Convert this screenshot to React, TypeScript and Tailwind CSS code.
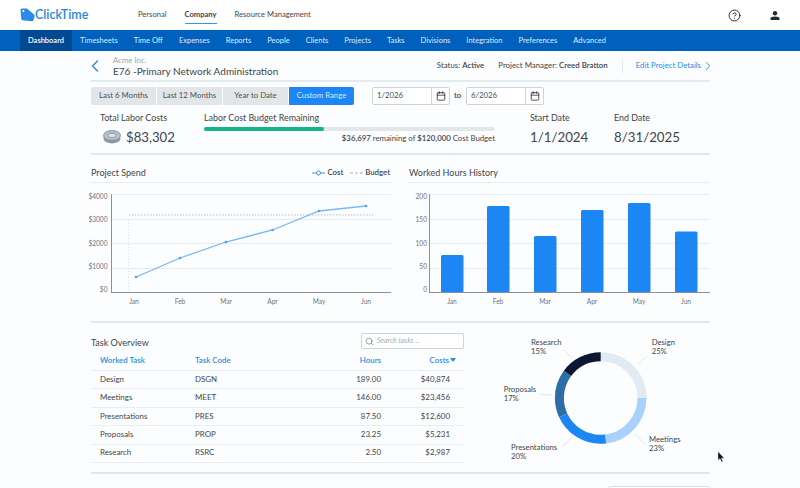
import React from "react";
import { ChevronLeft, ChevronRight, Calendar, Search, CircleHelp } from "lucide-react";

const nav = ["Dashboard","Timesheets","Time Off","Expenses","Reports","People","Clients","Projects","Tasks","Divisions","Integration","Preferences","Advanced"];
const rows = [
  ["Design","DSGN","189.00","$40,874"],
  ["Meetings","MEET","146.00","$23,456"],
  ["Presentations","PRES","87.50","$12,600"],
  ["Proposals","PROP","23.25","$5,231"],
  ["Research","RSRC","2.50","$2,987"],
];
const months = ["Jan","Feb","Mar","Apr","May","Jun"];

function Logo() {
  return (
    <div className="flex items-center">
      <svg width="15" height="14" viewBox="0 0 15 14">
        <path d="M0.5 2 Q0.5 0.5 2 0.5 L7 0.5 L14 6.5 Q15 7.5 14.5 9 L13.5 12 Q13 13.5 11.5 13.2 L2.5 12.3 Q1.5 12 1.3 11 Z" fill="#2b8be8" />
        <circle cx="3.4" cy="3" r="1" fill="#fff" />
      </svg>
      <span className="text-[12.5px] font-semibold text-[#2a86dc] leading-none">ClickTime</span>
    </div>
  );
}

function LineChart() {
  const pts = [[136,277],[180,258],[226,242],[272.5,230],[319,211],[366,206]];
  return (
    <svg width="312" height="118" viewBox="88 190 312 118" className="block">
      {[194.5,219.5,243.5,268.5].map(y => <line key={y} x1="112" x2="391" y1={y} y2={y} stroke="#e6ebf0" />)}
      {[["$4000",199],["$3000",221.5],["$2000",245.5],["$1000",268.5],["$0",291.5]].map(([t,y]) => (
        <text key={t as string} x="107.5" y={y as number} textAnchor="end" fontSize="6.6" fill="#707478">{t}</text>
      ))}
      <line x1="128.5" x2="128.5" y1="220" y2="290" stroke="#d5dbe1" strokeDasharray="1 2" />
      <line x1="129" x2="374" y1="215" y2="215" stroke="#b9bec3" strokeDasharray="1.5 1.5" />
      <line x1="111.5" x2="111.5" y1="194" y2="293" stroke="#8a929a" />
      <line x1="111" x2="391" y1="292.5" y2="292.5" stroke="#8a929a" />
      <polyline points={pts.map(p => p.join(",")).join(" ")} fill="none" stroke="#7ab8f5" strokeWidth="1.3" />
      {pts.map(p => <circle key={p[0]} cx={p[0]} cy={p[1]} r="1.3" fill="#4ea1f0" />)}
      {months.map((m,i) => <text key={m} x={[134,180,226,272.5,319,366][i]} y="303.5" textAnchor="middle" fontSize="6.6" fill="#707478">{m}</text>)}
    </svg>
  );
}

function BarChart() {
  const vals = [[441,255],[487,206],[534,236],[581,210],[628,203],[675,231.5]];
  return (
    <svg width="312" height="118" viewBox="409 190 312 118" className="block">
      {[194.5,219.5,243.5,268.5].map(y => <line key={y} x1="430" x2="710" y1={y} y2={y} stroke="#e6ebf0" />)}
      {[["200",199],["150",221.5],["100",245.5],["50",268.5],["0",291.5]].map(([t,y]) => (
        <text key={t as string} x="427" y={y as number} textAnchor="end" fontSize="6.6" fill="#707478">{t}</text>
      ))}
      {vals.map(([x,y]) => <rect key={x} x={x} y={y} width="22.5" height={292.5-y} rx="1.5" fill="#1c87f4" />)}
      <line x1="429.5" x2="429.5" y1="194" y2="293" stroke="#8a929a" />
      <line x1="429" x2="710" y1="292.5" y2="292.5" stroke="#8a929a" />
      {months.map((m,i) => <text key={m} x={[452,498,545,592,639,686][i]} y="303.5" textAnchor="middle" fontSize="6.6" fill="#707478">{m}</text>)}
    </svg>
  );
}

function Donut() {
  const cx = 130.7, cy = 75, r = 41.3;
  const segs = [[0,25,"#e2eaf3"],[25,23,"#a8d1fb"],[48,20,"#1c87f4"],[68,17,"#2f6da6"],[85,15,"#0b1733"]] as const;
  const c = 2*Math.PI*r;
  return (
    <svg width="240" height="149" viewBox="0 0 240 149" className="block">
      <g transform={`rotate(-90 ${cx} ${cy})`}>
        {segs.map(([s,l,col]) => (
          <circle key={s} cx={cx} cy={cy} r={r} fill="none" stroke={col} strokeWidth="9"
            strokeDasharray={`${c*l/100} ${c}`} strokeDashoffset={-c*s/100} />
        ))}
      </g>
      <g stroke="#e3e7eb" fill="none">
        <path d="M176.7 33 L168.3 41.3" /><path d="M165 111 L175 121" /><path d="M100.7 115 L92.7 124" /><path d="M70 71.5 L82.7 72" /><path d="M93.3 26.3 L101.7 34.7" />
      </g>
    </svg>
  );
}

function Label({ a, b, cls }: { a: string; b: string; cls: string }) {
  return (
    <div className={`absolute text-[7.7px] leading-[9.4px] text-[#3f454b] ${cls}`}>
      <div>{a}</div><div>{b}</div>
    </div>
  );
}

function DateBox({ v }: { v: string }) {
  return (
    <div className="flex h-[18px] w-[78px] items-center rounded-[2px] border border-[#cfd3d7] bg-white text-[7.8px] text-[#4b5158]">
      <span className="flex-1 pl-1">{v}</span>
      <span className="flex h-full w-[18px] items-center justify-center border-l border-[#cfd3d7]">
        <Calendar size={10} strokeWidth={2} className="text-[#2f3337]" />
      </span>
    </div>
  );
}

export default function App() {
  return (
    <div className="relative h-[488px] w-[800px] overflow-hidden bg-[#fcfdfe] text-[#3f454b] [font-family:Lato,'Open_Sans',sans-serif]">
      <header className="flex h-[30px] items-center bg-white pl-5 pr-[20px]">
        <div className="w-[118px]"><Logo /></div>
        <nav className="flex gap-[18px] text-[7.6px] text-[#3f454b]">
          <span className="border-b border-transparent py-[3px]">Personal</span>
          <span className="border-b border-[#3b93e4] py-[3px] font-bold">Company</span>
          <span className="border-b border-transparent py-[3px]">Resource Management</span>
        </nav>
        <div className="ml-auto flex items-center gap-[29px]">
          <CircleHelp size={13} strokeWidth={1.8} className="text-[#26292c]" />
          <svg width="10" height="9" viewBox="0 0 10 9">
            <circle cx="5" cy="2.3" r="2.2" fill="#26292c" />
            <path d="M0.5 9 V7.6 Q0.5 5.6 5 5.6 Q9.5 5.6 9.5 7.6 V9 Z" fill="#26292c" />
          </svg>
        </div>
      </header>
      <div className="flex h-[21px] items-stretch bg-[#0060be] pl-5 text-[7.5px] text-[#dfecf9]">
        {nav.map((n,i) => (
          <span key={n} className={`flex items-center px-2 ${i===0 ? "bg-[#004a94] text-white font-semibold" : ""}`}>{n}</span>
        ))}
      </div>
      <main className="ml-[91px] w-[619px]">
        <div className="flex h-[31px] items-center border-b-2 border-[#e2ebf0]">
          <ChevronLeft size={20} strokeWidth={1.6} className="-ml-[6px] text-[#2b86e0]" />
          <div className="ml-[8px] mt-[2px] leading-none">
            <div className="text-[7.8px] text-[#a0a5aa]">Acme Inc.</div>
            <div className="mt-[2px] text-[10px] text-[#3f454b]">E76 -Primary Network Administration</div>
          </div>
          <div className="ml-auto flex items-center text-[7.85px]">
            <span>Status: <b className="font-semibold">Active</b></span>
            <span className="ml-[14px]">Project Manager: <b className="font-semibold">Creed Bratton</b></span>
            <span className="ml-[14px] flex h-[14px] items-center border-l border-[#e5e8ea] pl-[13px] text-[7.8px] text-[#2b8be8]">Edit Project Details<ChevronRight size={14} strokeWidth={1.6} className="-mr-[5px]" /></span>
          </div>
        </div>
        <div className="mt-[5px] flex items-center">
          <div className="flex h-[18px] gap-px text-[7.8px] text-[#4b5158]">
            <span className="flex w-[65px] items-center justify-center rounded-l-[2px] bg-[#e3e6e8]">Last 6 Months</span>
            <span className="flex w-[65px] items-center justify-center bg-[#e3e6e8]">Last 12 Months</span>
            <span className="flex w-[65px] items-center justify-center bg-[#e3e6e8]">Year to Date</span>
            <span className="flex w-[65px] items-center justify-center rounded-r-[2px] bg-[#1c87f4] text-[#d5e8fd]">Custom Range</span>
          </div>
          <div className="ml-[18px]"><DateBox v="1/2026" /></div>
          <span className="mx-[4px] w-[8px] text-[7.8px] font-semibold">to</span>
          <DateBox v="6/2026" />
        </div>
        <div className="mt-[7px] flex h-[43px] border-b-2 border-[#e0e8ee]">
          <div className="ml-[9px] w-[104px]">
            <div className="text-[8.9px] leading-[12px]">Total Labor Costs</div>
            <div className="mt-[4px] flex items-center gap-[5px] pl-[3px]">
              <svg width="18" height="14" viewBox="0 0 18 14">
                <ellipse cx="9" cy="8.5" rx="8.5" ry="5" fill="#8c99a8" />
                <ellipse cx="9" cy="5.5" rx="8.5" ry="5" fill="#b5bfca" stroke="#7f8c9b" strokeWidth="0.8" />
                <ellipse cx="9" cy="5.5" rx="4" ry="2.2" fill="#dfe4ea" stroke="#7f8c9b" strokeWidth="0.8" />
              </svg>
              <span className="text-[13.2px] leading-[18px]">$83,302</span>
            </div>
          </div>
          <div className="w-[291px]">
            <div className="text-[8.9px] leading-[12px]">Labor Cost Budget Remaining</div>
            <div className="mt-[3px] h-1 rounded-full bg-[#e4e7ea]">
              <div className="h-1 w-[120px] rounded-full bg-[#12b48c]" />
            </div>
            <div className="mt-px text-right text-[7.8px] leading-[12px]"><b className="font-semibold">$36,697</b> remaining of <b className="font-semibold">$120,000</b> Cost Budget</div>
          </div>
          <div className="ml-[35px] w-[84px]">
            <div className="text-[8.9px] leading-[12px]">Start Date</div>
            <div className="mt-[4px] text-[13.3px] leading-[18px]">1/1/2024</div>
          </div>
          <div>
            <div className="text-[8.9px] leading-[12px]">End Date</div>
            <div className="mt-[4px] text-[13.3px] leading-[18px]">8/31/2025</div>
          </div>
        </div>
        <div className="flex gap-[18px]">
          <section className="w-[300px]">
            <div className="flex h-[28px] items-center justify-between border-b border-[#e6edf1] pt-[8px] text-[9px]">
              <span>Project Spend</span>
              <span className="flex items-center gap-[7px] pr-[1px] text-[7.8px]">
                <span className="flex items-center gap-[2px]">
                  <svg width="13" height="6" viewBox="0 0 13 6"><line x1="0" x2="13" y1="3" y2="3" stroke="#3b93e4" /><circle cx="6.5" cy="3" r="2" fill="#fff" stroke="#3b93e4" /></svg>
                  <b className="font-semibold">Cost</b>
                </span>
                <span className="flex items-center gap-[2px]">
                  <svg width="13" height="6" viewBox="0 0 13 6"><line x1="0" x2="13" y1="3" y2="3" stroke="#aab0b6" strokeDasharray="3 2" /></svg>
                  <b className="font-semibold">Budget</b>
                </span>
              </span>
            </div>
            <div className="mt-[7px] -ml-[3px]"><LineChart /></div>
          </section>
          <section className="w-[301px]">
            <div className="flex h-[28px] items-center border-b border-[#e6edf1] pt-[8px] text-[9px]">Worked Hours History</div>
            <div className="mt-[7px]"><BarChart /></div>
          </section>
        </div>
        <div className="mt-[13px] flex h-[153px] border-y-2 border-[#e0e8ee]">
          <section className="w-[373px]">
            <div className="flex h-[28px] items-start justify-between">
              <span className="mt-[14px] text-[9px] leading-[12px]">Task Overview</span>
              <div className="mt-[10px] flex h-[16px] w-[103px] items-center gap-[3px] rounded-[2px] border border-[#cfd3d7] bg-white pl-[3px] text-[7.1px] italic text-[#a8adb2]">
                <Search size={9} className="text-[#7d8388]" />Search tasks ...
              </div>
            </div>
            <div className="grid h-[20px] grid-cols-[95px_112px_74px_1fr] items-center border-b border-[#e6edf1] pl-[9px] pr-[8px] text-[7.9px] font-semibold text-[#2b8be8]">
              <span>Worked Task</span><span>Task Code</span><span className="text-right">Hours</span>
              <span className="flex items-center justify-end">Costs<svg width="6" height="4" viewBox="0 0 6 4" className="ml-px"><path d="M0 0H6L3 4Z" fill="#2b8be8" /></svg></span>
            </div>
            {rows.map(r => (
              <div key={r[0]} className="grid h-[18.4px] grid-cols-[95px_112px_74px_1fr] items-center border-b border-[#e9eef2] pl-[9px] pr-[14px] text-[7.9px]">
                <span>{r[0]}</span><span>{r[1]}</span><span className="text-right">{r[2]}</span><span className="text-right">{r[3]}</span>
              </div>
            ))}
          </section>
          <section className="relative ml-[6px] w-[240px]">
            <Donut />
            <Label a="Research" b="15%" cls="left-[61px] top-[15px]" />
            <Label a="Design" b="25%" cls="left-[181.7px] top-[15px]" />
            <Label a="Proposals" b="17%" cls="left-[33.7px] top-[61.5px]" />
            <Label a="Meetings" b="23%" cls="left-[179px] top-[112px]" />
            <Label a="Presentations" b="20%" cls="left-[41px] top-[120px]" />
          </section>
        </div>
        <div className="ml-auto mt-[12px] h-[20px] w-[102px] rounded-[3px] border border-[#d8dcdf] bg-white" />
      </main>
      <svg width="8" height="12" viewBox="0 0 8 12" className="absolute left-[717px] top-[451px]">
        <path d="M1 0.5 V9.5 L3 7.6 L4.6 11 L6 10.4 L4.5 7.2 H7.2 Z" fill="#111" stroke="#fff" strokeWidth="0.4" />
      </svg>
    </div>
  );
}
